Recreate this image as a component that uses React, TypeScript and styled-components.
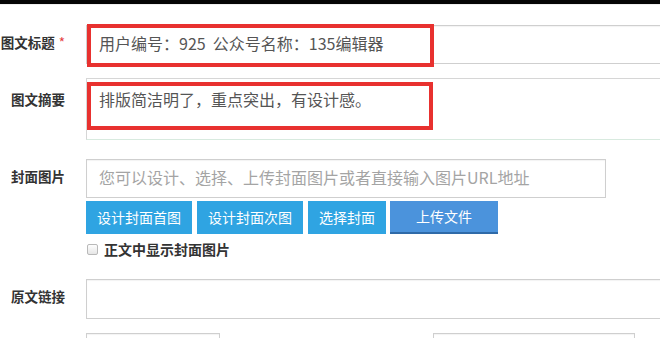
import React from 'react';
import styled, { createGlobalStyle } from 'styled-components';

const GlobalStyle = createGlobalStyle`
  html, body {
    margin: 0;
    padding: 0;
    background: #ffffff;
    overflow: hidden;
  }
  body {
    font-family: "Noto Sans CJK SC", "Noto Sans", "Liberation Sans", sans-serif;
    color: #333;
  }
`;

const TopBar = styled.div`
  height: 4px;
  background: #050505;
  border-bottom: 1px solid #f0f0f0;
`;

const Form = styled.div`
  width: 720px;
  padding-top: 20px;
  display: flex;
  flex-direction: column;
`;

const Row = styled.div<{ gap?: number }>`
  display: grid;
  grid-template-columns: 65px 1fr;
  column-gap: 21px;
  margin-top: ${p => p.gap ?? 0}px;
`;

const Label = styled.div<{ offset?: number }>`
  font-size: 13.5px;
  font-weight: 700;
  color: #333;
  text-align: right;
  line-height: 35px;
  padding-top: ${p => p.offset ?? 0}px;
  white-space: nowrap;
`;

const Required = styled.span`
  color: #e4393c;
  font-weight: 400;
  margin-left: 4px;
`;

const Field = styled.div`
  position: relative;
  display: flex;
  flex-direction: column;
`;

const TextInput = styled.input<{ w?: number; h?: number }>`
  box-sizing: border-box;
  width: ${p => (p.w ? `${p.w}px` : '100%')};
  height: ${p => p.h ?? 39}px;
  margin: 0;
  padding: 0 12px 4px;
  border: 1px solid #cfcfcf;
  border-radius: 0;
  box-shadow: inset 0 1px 1px rgba(0, 0, 0, 0.05);
  background: #fff;
  font-family: "Noto Sans CJK SC", "Noto Sans", sans-serif;
  font-size: 16px;
  color: #555;
  outline: none;

  &::placeholder {
    color: #a4a4a4;
  }
`;

const TextArea = styled.textarea`
  box-sizing: border-box;
  width: 100%;
  height: 62px;
  margin: 0;
  padding: 9px 12px;
  border: 1px solid #d6d6d6;
  border-bottom-color: #d8eadf;
  border-radius: 0;
  resize: none;
  font-family: "Noto Sans CJK SC", "Noto Sans", sans-serif;
  font-size: 16px;
  line-height: 22px;
  color: #555;
  outline: none;
`;

const Highlight = styled.span<{ top: number; w: number; h: number }>`
  position: absolute;
  left: 1px;
  top: ${p => p.top}px;
  width: ${p => p.w}px;
  height: ${p => p.h}px;
  box-sizing: border-box;
  border: 4px solid #e8312f;
  pointer-events: none;
`;

const ButtonRow = styled.div`
  display: flex;
  gap: 5px;
  margin-top: 3px;
`;

const Button = styled.button<{ upload?: boolean }>`
  height: 33px;
  margin: 0;
  padding: 0 ${p => (p.upload ? 26 : 11)}px 2px;
  border: none;
  border-bottom: ${p => (p.upload ? '2px solid #2f6aa8' : 'none')};
  margin-left: ${p => (p.upload ? -1 : 0)}px;
  background: ${p => (p.upload ? '#4b93dc' : '#2fa4e2')};
  color: #fff;
  font-family: "Noto Sans CJK SC", "Noto Sans", sans-serif;
  font-size: 14px;
  cursor: pointer;
`;

const CheckRow = styled.label`
  display: flex;
  align-items: center;
  gap: 6px;
  margin-top: 4px;
  padding-left: 1px;
  height: 22px;
  font-size: 14px;
  font-weight: 700;
  color: #333;
`;

const CheckBox = styled.span`
  box-sizing: border-box;
  width: 11px;
  height: 11px;
  border: 1px solid #b9b9b9;
  border-radius: 2px;
  background: linear-gradient(#fdfdfd, #e6e6e6);
`;

const SplitRow = styled.div`
  display: flex;
  align-items: flex-start;
  gap: 213px;
`;

export default function App() {
  return (
    <>
      <GlobalStyle />
      <TopBar />
      <Form>
        <Row>
          <Label>
            图文标题<Required>*</Required>
          </Label>
          <Field>
            <TextInput readOnly value="用户编号：925  公众号名称：135编辑器" />
            <Highlight top={-1} w={347} h={43} />
          </Field>
        </Row>

        <Row gap={14}>
          <Label offset={4}>图文摘要</Label>
          <Field>
            <TextArea readOnly value="排版简洁明了，重点突出，有设计感。" />
            <Highlight top={4} w={346} h={48} />
          </Field>
        </Row>

        <Row gap={19}>
          <Label>封面图片</Label>
          <Field>
            <TextInput w={520} placeholder="您可以设计、选择、上传封面图片或者直接输入图片URL地址" />
            <ButtonRow>
              <Button>设计封面首图</Button>
              <Button>设计封面次图</Button>
              <Button>选择封面</Button>
              <Button upload>上传文件</Button>
            </ButtonRow>
            <CheckRow>
              <CheckBox />
              正文中显示封面图片
            </CheckRow>
          </Field>
        </Row>

        <Row gap={19}>
          <Label>原文链接</Label>
          <Field>
            <TextInput h={40} />
          </Field>
        </Row>

        <Row gap={14}>
          <Label />
          <SplitRow>
            <TextInput w={134} h={34} />
            <TextInput w={202} h={34} />
          </SplitRow>
        </Row>
      </Form>
    </>
  );
}
